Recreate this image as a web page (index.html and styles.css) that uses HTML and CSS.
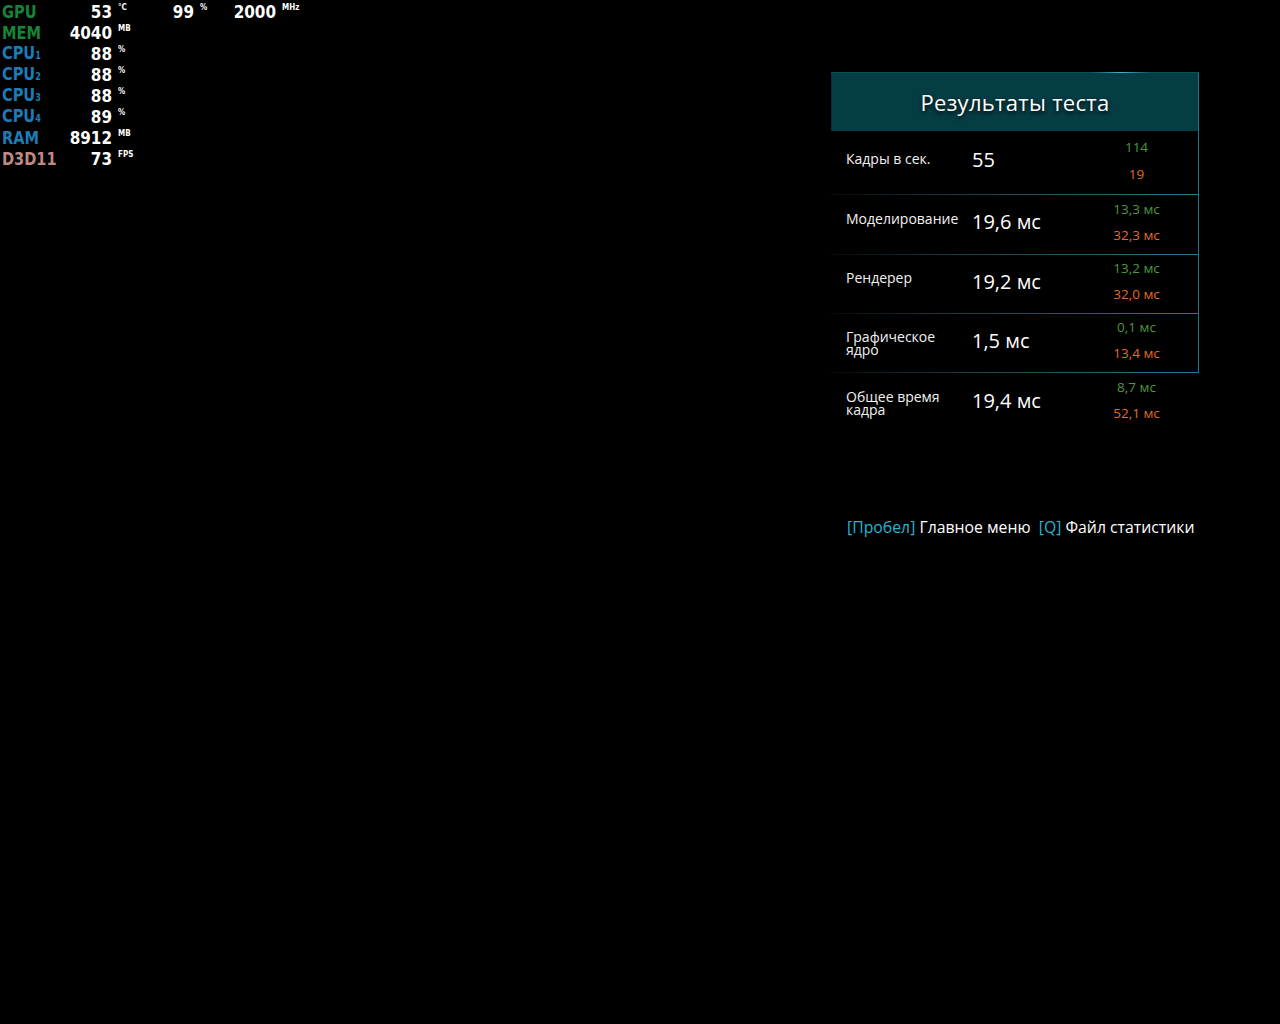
FILE: index.html
```html
<!DOCTYPE html>
<html lang="ru">
<head>
    <meta charset="UTF-8">
    <meta name="viewport" content="width=device-width, initial-scale=1.0">
    <title>Результаты теста</title>
    <link rel="stylesheet" href="styles.css">
</head>
<body>
    <div class="osd">
        <div class="osd-row">
            <span class="lbl gpu">GPU</span><span class="val">53</span><span class="unit">°C</span>
            <span class="val">99</span><span class="unit">%</span>
            <span class="val">2000</span><span class="unit">MHz</span>
        </div>
        <div class="osd-row">
            <span class="lbl gpu">MEM</span><span class="val">4040</span><span class="unit">MB</span>
        </div>
        <div class="osd-row">
            <span class="lbl cpu">CPU<sub>1</sub></span><span class="val">88</span><span class="unit">%</span>
        </div>
        <div class="osd-row">
            <span class="lbl cpu">CPU<sub>2</sub></span><span class="val">88</span><span class="unit">%</span>
        </div>
        <div class="osd-row">
            <span class="lbl cpu">CPU<sub>3</sub></span><span class="val">88</span><span class="unit">%</span>
        </div>
        <div class="osd-row">
            <span class="lbl cpu">CPU<sub>4</sub></span><span class="val">89</span><span class="unit">%</span>
        </div>
        <div class="osd-row">
            <span class="lbl cpu">RAM</span><span class="val">8912</span><span class="unit">MB</span>
        </div>
        <div class="osd-row">
            <span class="lbl d3d">D3D11</span><span class="val">73</span><span class="unit">FPS</span>
        </div>
    </div>

    <div class="results">
        <div class="results-head">Результаты теста</div>

        <div class="res-row first">
            <div class="res-name">Кадры в сек.</div>
            <div class="res-val">55</div>
            <div class="res-range">
                <span class="best">114</span>
                <span class="worst">19</span>
            </div>
        </div>
        <div class="res-row second">
            <div class="res-name">Моделирование</div>
            <div class="res-val">19,6 мс</div>
            <div class="res-range">
                <span class="best">13,3 мс</span>
                <span class="worst">32,3 мс</span>
            </div>
        </div>
        <div class="res-row">
            <div class="res-name">Рендерер</div>
            <div class="res-val">19,2 мс</div>
            <div class="res-range">
                <span class="best">13,2 мс</span>
                <span class="worst">32,0 мс</span>
            </div>
        </div>
        <div class="res-row">
            <div class="res-name">Графическое ядро</div>
            <div class="res-val">1,5 мс</div>
            <div class="res-range">
                <span class="best">0,1 мс</span>
                <span class="worst">13,4 мс</span>
            </div>
        </div>
        <div class="res-row last">
            <div class="res-name">Общее время кадра</div>
            <div class="res-val">19,4 мс</div>
            <div class="res-range">
                <span class="best">8,7 мс</span>
                <span class="worst">52,1 мс</span>
            </div>
        </div>

        <div class="hints">
            <span class="key">[Пробел]</span> Главное меню&nbsp; <span class="key">[Q]</span> Файл статистики
        </div>
    </div>
</body>
</html>
```

FILE: styles.css
```css
body {
    margin: 0;
    background-color: #000;
    color: #fff;
    font-family: "Open Sans", "Noto Sans", sans-serif;
}

/* overlay in the corner */
.osd {
    position: absolute;
    top: 1px;
    left: 2px;
    font-family: "DejaVu Sans Condensed", "DejaVu Sans", sans-serif;
    font-weight: bold;
}
.osd-row {
    display: grid;
    grid-template-columns: 58px 52px 36px 46px 32px 50px auto;
    align-items: center;
    height: 21px;
}
.lbl {
    font-size: 18px;
    line-height: 17px;
    transform: scaleX(0.9);
    transform-origin: left center;
    white-space: nowrap;
}
.lbl sub {
    font-size: 10px;
    vertical-align: baseline;
}
.gpu {
    color: #16843a;
}
.cpu {
    color: #1c7cb8;
}
.d3d {
    color: #c08a84;
}
.val {
    font-size: 18px;
    line-height: 17px;
    text-align: right;
    transform: scaleX(0.94);
    transform-origin: right center;
}
.unit {
    align-self: start;
    font-size: 8px;
    line-height: 14px;
    padding-left: 6px;
}

/* results panel */
.results {
    width: 368px;
    margin: 72px 0 0 831px;
}
.results-head {
    position: relative;
    height: 59px;
    background-color: #053d45;
    border-top: 1px solid #0b5059;
    box-sizing: border-box;
    display: flex;
    align-items: center;
    justify-content: center;
    font-size: 22px;
    letter-spacing: 0.3px;
    text-shadow: 0 2px 4px #000;
    box-shadow: inset -1px 0 0 #2a7088, inset 1px 0 0 #043238;
}
.results-head::after {
    content: "";
    position: absolute;
    top: -1px;
    left: 260px;
    width: 60px;
    height: 1px;
    background: linear-gradient(to right, transparent, #3fb4d0, transparent);
}
.res-row {
    display: grid;
    grid-template-columns: 126px 110px 1fr;
    align-items: center;
    box-sizing: border-box;
    height: 59px;
    padding-left: 15px;
    box-shadow: inset -1px 0 0 #2a7088;
    border-bottom: 1px solid;
    border-image: linear-gradient(to right, #05090b, #1c3c48 35%, #2e7896) 1;
}
.res-row.first {
    height: 64px;
}
.res-row.second {
    height: 60px;
}
.res-row.last {
    border-bottom: none;
    box-shadow: none;
    height: 60px;
}
.res-name {
    width: 118px;
    font-size: 14px;
    line-height: 13px;
    min-height: 26px;
    color: #f2f2f2;
}
.res-row.first .res-name {
    min-height: 22px;
}
.res-val {
    font-size: 20px;
    margin-bottom: 6px;
}
.res-range {
    display: flex;
    flex-direction: column;
    align-items: center;
    gap: 8px;
    font-size: 13.5px;
    line-height: 18px;
    padding-right: 8px;
    margin-bottom: 6px;
}
.res-row.first .res-range {
    gap: 9px;
    margin-bottom: 4px;
}
.best {
    color: #4b9a3c;
}
.worst {
    color: #e06a2c;
}

.hints {
    margin-top: 83px;
    padding-left: 16px;
    font-size: 15.8px;
    white-space: nowrap;
}
.key {
    color: #2ab2d2;
}
```
